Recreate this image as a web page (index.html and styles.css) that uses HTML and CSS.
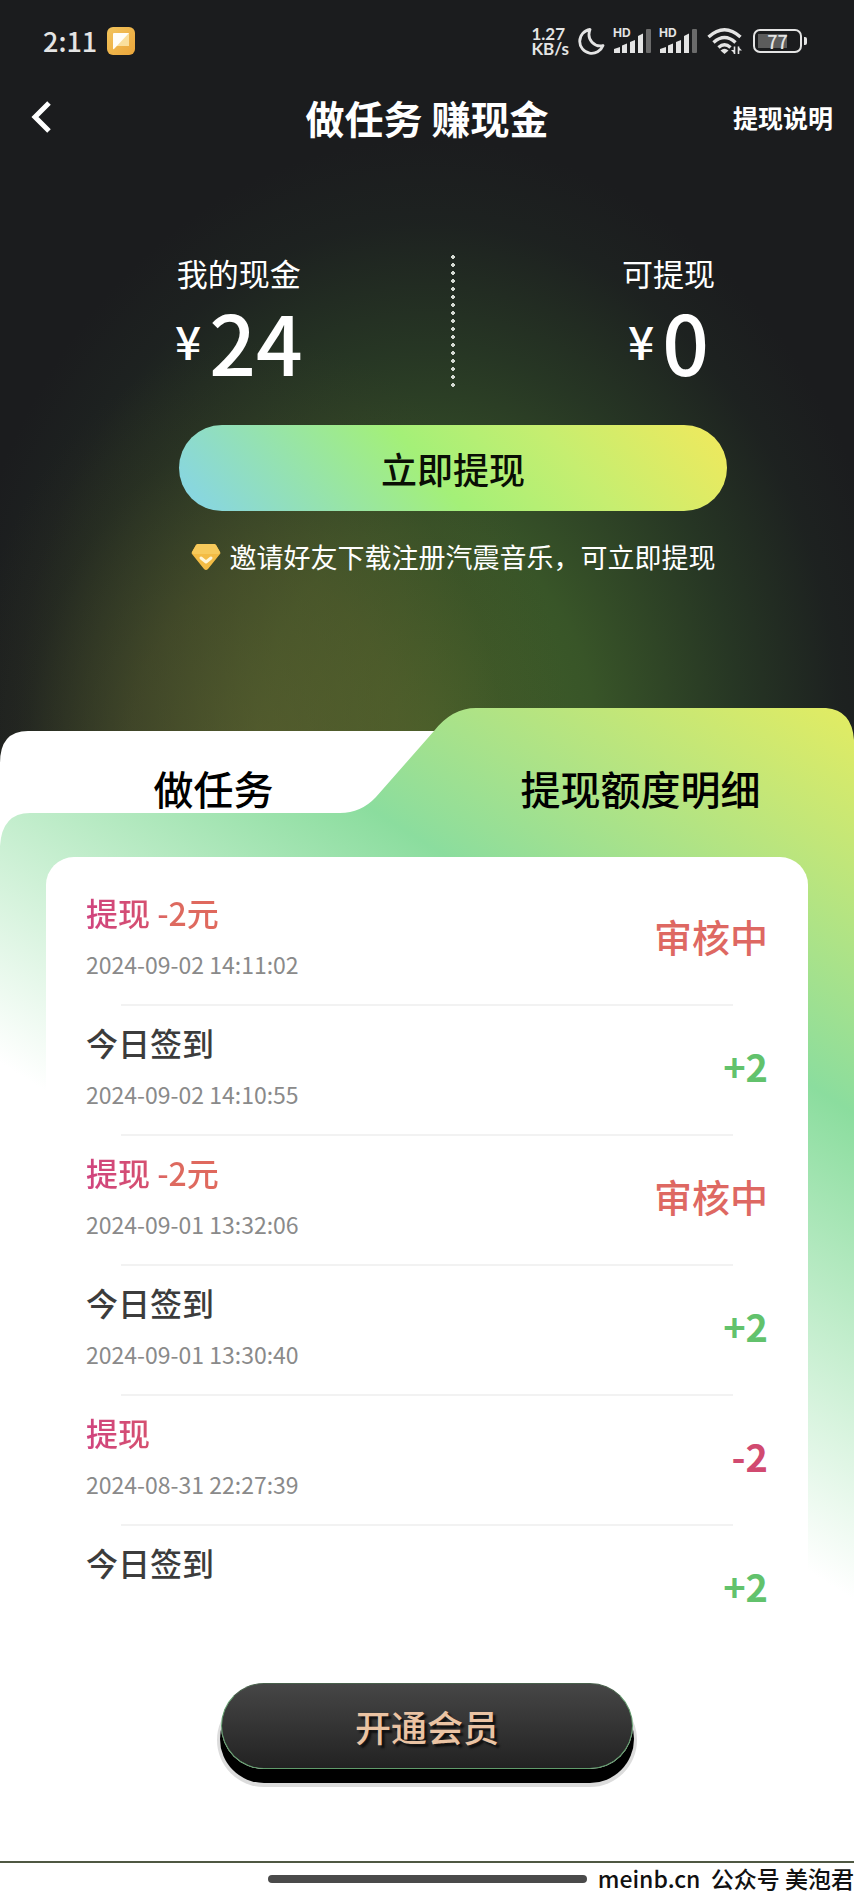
FILE: index.html
```html
<!DOCTYPE html>
<html lang="zh-CN">
<head>
<meta charset="utf-8">
<meta name="viewport" content="width=device-width, initial-scale=1">
<title>做任务 赚现金</title>
<link rel="stylesheet" href="styles.css">
</head>
<body>
<section class="hero">
  <div class="status-bar">
    <div class="status-left">
      <span class="clock">2:11</span>
      <svg class="app-icon" width="28" height="28" viewBox="0 0 28 28" aria-hidden="true">
        <defs><linearGradient id="app" x1="0" y1="0" x2="1" y2="1"><stop offset="0" stop-color="#f2c45c"/><stop offset="1" stop-color="#eba53a"/></linearGradient></defs>
        <rect width="28" height="28" rx="6" fill="url(#app)"/>
        <path d="M8 6h14v13H10z" fill="#fadf9c"/>
        <path d="M6 7q0-1 1-1h15L7 22q-1 1-1-1z" fill="#fffdf6"/>
      </svg>
    </div>
    <div class="status-right">
      <span class="speed"><span>1.27</span><span>KB/s</span></span>
      <svg class="moon" width="28" height="28" viewBox="0 0 28 28" aria-hidden="true"><path d="M13 2.500A12 12 0 1 0 26 18.500C18 20.500 9 13 13 2.500z" fill="none" stroke="#e4e4e4" stroke-width="2.800" stroke-linejoin="round"/></svg>
      <span class="signal"><span class="hd">HD</span>
        <svg width="38" height="26" viewBox="0 0 38 26" aria-hidden="true"><g fill="#e4e4e4"><path d="M1 25v-4l6-2v6zM9 25v-7.500l5-2V25zM17 25V14l5-2v13zM25 25V8l5-2.500V25z"/><rect x="33" y="1" width="5" height="24" rx="1" fill="#6b6b6b"/></g></svg>
      </span>
      <span class="signal"><span class="hd">HD</span>
        <svg width="38" height="26" viewBox="0 0 38 26" aria-hidden="true"><g fill="#e4e4e4"><path d="M1 25v-4l6-2v6zM9 25v-7.500l5-2V25zM17 25V14l5-2v13zM25 25V8l5-2.500V25z"/><rect x="33" y="1" width="5" height="24" rx="1" fill="#6b6b6b"/></g></svg>
      </span>
      <svg class="wifi" width="36" height="28" viewBox="0 0 36 28" aria-hidden="true"><g fill="none" stroke="#e4e4e4" stroke-width="3.400"><path d="M1.500 10Q17.500-4.500 33.500 10"/><path d="M6.500 15.500Q17.500 5.500 28.500 15.500"/><path d="M11.500 20.500Q17.500 15 23.500 20.500"/></g><path d="M13.500 23.500Q17.500 20 21.500 23.500L17.500 27z" fill="#e4e4e4"/><path d="M27.500 19.500V27M31.500 27v-7.500" stroke="#e4e4e4" stroke-width="1.600"/><path d="M24 23l4 4v-4zM31 19.500l4 4h-4z" fill="#e4e4e4"/></svg>
      <span class="battery">77</span>
    </div>
  </div>

  <header class="title-bar">
    <button class="back" type="button" aria-label="返回">
      <svg width="20" height="32" viewBox="0 0 20 32" aria-hidden="true"><path d="M18 2L4 16l14 14" fill="none" stroke="#fff" stroke-width="5"/></svg>
    </button>
    <h1>做任务 赚现金</h1>
    <a class="help" href="#help">提现说明</a>
  </header>

  <div class="wallet">
    <div class="balances">
      <div class="balance balance-mine">
        <span class="label">我的现金</span>
        <span class="amount"><span class="yen">¥</span><span>24</span></span>
      </div>
      <div class="dots"></div>
      <div class="balance balance-available">
        <span class="label">可提现</span>
        <span class="amount"><span class="yen">¥</span><span>0</span></span>
      </div>
    </div>
    <button class="withdraw" type="button">立即提现</button>
    <p class="invite">
      <svg width="30" height="28" viewBox="0 0 30 28" aria-hidden="true"><path d="M7 1h16q1 0 2 1l4 7q1 1 0 2L17 26q-2 2-4 0L1 11q-1-1 0-2l4-7q1-1 2-1z" fill="#f3bc45"/><path d="M7 1h16q1 0 2 1l4 7q0 2-3 2H4q-3 0-3-2l4-7q1-1 2-1z" fill="#f7ca5b"/><path d="M10 15l5 4 5-4" fill="none" stroke="#fff6d8" stroke-width="3" stroke-linecap="round" stroke-linejoin="round"/></svg>
      <span>邀请好友下载注册汽震音乐，可立即提现</span>
    </p>
  </div>
</section>

<main class="sheet">
  <svg class="sheet-bg" viewBox="0 0 854 940" aria-hidden="true">
    <defs>
      <linearGradient id="fade" gradientUnits="userSpaceOnUse" x1="854" y1="0" x2="452" y2="639">
        <stop offset="0" stop-color="#e3ec62"/><stop offset="0.454" stop-color="#8bdd9e"/><stop offset="1" stop-color="#fff"/>
      </linearGradient>
    </defs>
    <path d="M0 55Q0 23 28 23H460V120H854V940H0z" fill="#fff"/>
    <path d="M0 138Q2 105 30 105H340Q361 105 376 89L434 23Q452 0 476 0H826Q852 2 854 32V940H0z" fill="url(#fade)"/>
  </svg>
  <nav class="tabs">
    <button type="button">做任务</button>
    <button type="button" aria-current="page">提现额度明细</button>
  </nav>
  <ul class="records">
    <li><div class="info"><strong class="out">提现 -2元</strong><time>2024-09-02 14:11:02</time></div><span class="result pending">审核中</span></li>
    <li><div class="info"><strong>今日签到</strong><time>2024-09-02 14:10:55</time></div><span class="result plus">+2</span></li>
    <li><div class="info"><strong class="out">提现 -2元</strong><time>2024-09-01 13:32:06</time></div><span class="result pending">审核中</span></li>
    <li><div class="info"><strong>今日签到</strong><time>2024-09-01 13:30:40</time></div><span class="result plus">+2</span></li>
    <li><div class="info"><strong class="out">提现</strong><time>2024-08-31 22:27:39</time></div><span class="result minus">-2</span></li>
    <li><div class="info"><strong>今日签到</strong></div><span class="result plus">+2</span></li>
  </ul>
  <button class="join" type="button">开通会员</button>
</main>

<footer class="bottom">
  <span class="home-bar"></span>
  <span class="credit">meinb.cn&nbsp; 公众号 美泡君</span>
</footer>
</body>
</html>
```
FILE: styles.css
```css
* { box-sizing: border-box; }

body {
  margin: 0;
  background: #fff;
  color: #fff;
  font-family: "Noto Sans CJK SC", "Noto Sans", sans-serif;
}

button {
  border: 0;
  padding: 0;
  background: none;
  color: inherit;
  font: inherit;
  cursor: pointer;
}

/* Dark header with glow */
.hero {
  padding-bottom: 193px;
  background:
    radial-gradient(ellipse 36% 56% at 31% 100%, rgba(108, 96, 50, 0.5), rgba(100, 88, 46, 0.38) 45%, rgba(70, 62, 36, 0.15) 78%, transparent),
    radial-gradient(ellipse 56% 78% at 50% 96%, rgba(70, 106, 42, 0.92), rgba(62, 96, 42, 0.84) 35%, rgba(50, 80, 42, 0.5) 65%, rgba(40, 60, 42, 0.18) 86%, transparent),
    #1b1c1e;
}

.status-bar {
  display: flex;
  justify-content: space-between;
  align-items: center;
  height: 82px;
  padding: 0 47px 0 43px;
  color: #e4e4e4;
}

.status-left { display: flex; align-items: center; gap: 10px; }
.clock { font-size: 27px; line-height: 40px; font-weight: 500; }
.status-right { display: flex; align-items: center; gap: 8px; }

.speed {
  display: flex;
  flex-direction: column;
  font: 700 17px/15px Lato, sans-serif;
}

.signal { position: relative; display: flex; }
.hd {
  position: absolute;
  top: 0;
  left: 0;
  font: 700 12px/10px Inter, sans-serif;
}
.wifi { margin-left: 2px; }

.battery {
  position: relative;
  width: 49px;
  height: 24px;
  margin: 0 5px 0 2px;
  border: 2px solid #e4e4e4;
  border-radius: 7px;
  background: linear-gradient(#5c5c5c, #5c5c5c) 3px center / 29px 14px no-repeat;
  font: 500 18px/20px "Noto Sans CJK SC", sans-serif;
  text-align: center;
}
.battery::after {
  content: "";
  position: absolute;
  top: 6px;
  right: -7px;
  width: 3px;
  height: 8px;
  border-radius: 0 2px 2px 0;
  background: #e4e4e4;
}

.title-bar {
  display: grid;
  grid-template-columns: 1fr auto 1fr;
  align-items: center;
  height: 70px;
  padding: 0 21px;
}
.back { display: flex; justify-self: start; margin-left: 10px; }
.title-bar h1 { margin: 0; font-size: 39px; line-height: 56px; font-weight: 700; }
.help {
  justify-self: end;
  color: #fff;
  font-size: 25px;
  line-height: 36px;
  font-weight: 700;
  text-decoration: none;
}

.wallet { padding: 101px 123px 0 175px; }
.balances { display: grid; grid-template-columns: 1fr 4px 1fr; }
.balance { display: flex; flex-direction: column; align-items: center; }
.balance-mine { justify-self: start; }
.balance-available { justify-self: end; padding-right: 16px; }
.label { font-size: 31px; line-height: 40px; }
.amount {
  display: flex;
  align-items: center;
  gap: 8px;
  font-size: 82px;
  line-height: 96px;
  font-weight: 500;
}
.yen { font-size: 46px; line-height: 94px; padding-bottom: 2px; }
.dots {
  height: 136px;
  background: radial-gradient(circle at center, #d5dad3 0 1px, #d5dad3 2px, transparent 2px) 0 0 / 4px 8px;
}

.withdraw {
  display: block;
  width: calc(100% - 8px);
  margin: 36px 4px 0;
  height: 86px;
  border-radius: 43px;
  background: linear-gradient(49deg, #88d6e0 4%, #a4f078 46%, #c6ee70 70%, #ede95e 97%);
  color: #0a0f05;
  font-size: 36px;
  line-height: 82px;
  font-weight: 500;
}

.invite {
  display: flex;
  align-items: center;
  justify-content: center;
  gap: 9px;
  margin: 26px 0 0;
  font-size: 27px;
  line-height: 40px;
  white-space: nowrap;
}

/* Folder-shaped sheet */
.sheet { position: relative; margin-top: -62px; color: #000; }
.sheet-bg { position: absolute; top: 0; left: 0; z-index: -1; width: 100%; height: auto; }
.sheet, .hero { isolation: isolate; }

.tabs { display: flex; padding: 50px 0 39px; }
.tabs button { flex: 1; font-size: 40px; line-height: 60px; font-weight: 500; }

.records {
  margin: 0 46px;
  padding: 19px 40px 0;
  border-radius: 28px 28px 0 0;
  background: #fff;
  list-style: none;
}
.records li {
  display: flex;
  justify-content: space-between;
  align-items: center;
  min-height: 130px;
  padding: 16px 0 26px;
  background: linear-gradient(#f2f2f2, #f2f2f2) center bottom / calc(100% - 70px) 2px no-repeat;
}
.records li:last-child { background: none; }

.info { display: flex; flex-direction: column; align-self: stretch; align-items: flex-start; gap: 16px; }
.info strong { color: #3c3c3c; font-size: 32px; line-height: 40px; font-weight: 500; }
.info .out {
  background: linear-gradient(90deg, #d0447e, #d5506f 62px, #dd6a60 80px, #e0685c 140px);
  background-clip: text;
  -webkit-background-clip: text;
  color: transparent;
}
.info time { color: #8a8a8a; font-size: 23px; line-height: 32px; }

.result { font-size: 38px; line-height: 48px; font-weight: 500; }
.pending { color: #de6862; }
.plus, .minus { font-weight: 700; }
.plus { color: #62c26c; }
.minus { color: #d14a70; }

.join {
  display: block;
  width: 412px;
  height: 86px;
  margin: 27px auto 92px;
  border: 1px solid #5f9a6a;
  border-top-color: #48604b;
  border-radius: 43px;
  background: linear-gradient(#464646, #222);
  box-shadow: 0 13px 0 1px #000, 0 14px 0 4px #dcdcdc;
  color: #eac3a3;
  font-size: 36px;
  font-weight: 500;
  text-shadow: 3px 3px 2px #111;
}

.bottom {
  display: grid;
  grid-template-columns: 1fr 319px 1fr;
  align-items: center;
  height: 36px;
  padding-bottom: 3px;
  border-top: 2px solid #4f5843;
  color: #111;
}
.home-bar { grid-column: 2; height: 8px; border-radius: 4px; background: #4a4a4a; }
.credit { justify-self: end; font-size: 23px; line-height: 31px; font-weight: 500; white-space: nowrap; }
```
